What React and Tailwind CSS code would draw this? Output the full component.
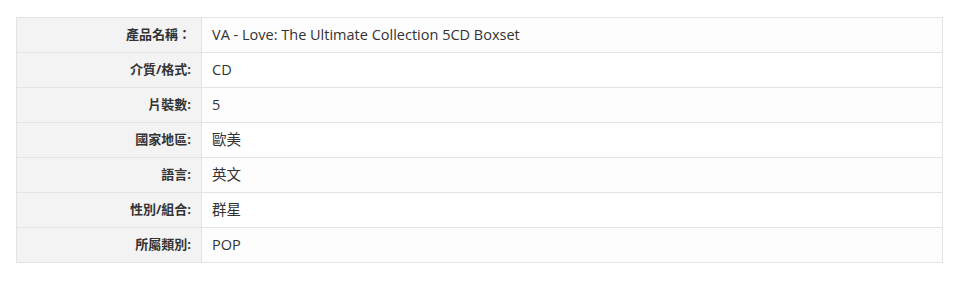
import React from "react";

const rows = [
    ["產品名稱：", "VA - Love: The Ultimate Collection 5CD Boxset"],
    ["介質/格式:", "CD"],
    ["片裝數:", "5"],
    ["國家地區:", "歐美"],
    ["語言:", "英文"],
    ["性別/組合:", "群星"],
    ["所屬類別:", "POP"],
];

const App = () => {
    return (
        <div className="w-full bg-white px-4 pt-[17px] pb-5" style={{ fontFamily: '"Open Sans", "Noto Sans CJK TC", sans-serif' }}>
            <div className="border border-[#e3e3e3] text-[14.5px] text-[#333]">
                {rows.map(([label, value], i) => (
                    <div key={i} className={`flex h-[34px] ${i > 0 ? "border-t border-[#e3e3e3] box-content" : ""}`}>
                        <div className="w-[185px] shrink-0 bg-[#f3f3f3] border-r border-[#e3e3e3] flex items-center justify-end pr-[10px] font-bold text-[13px]">
                            {label}
                        </div>
                        <div className={`flex-1 flex items-center pl-[10px] ${i % 2 === 0 ? "bg-[#fdfdfd]" : "bg-white"}`}>
                            {value}
                        </div>
                    </div>
                ))}
            </div>
        </div>
    );
};

export default App;
